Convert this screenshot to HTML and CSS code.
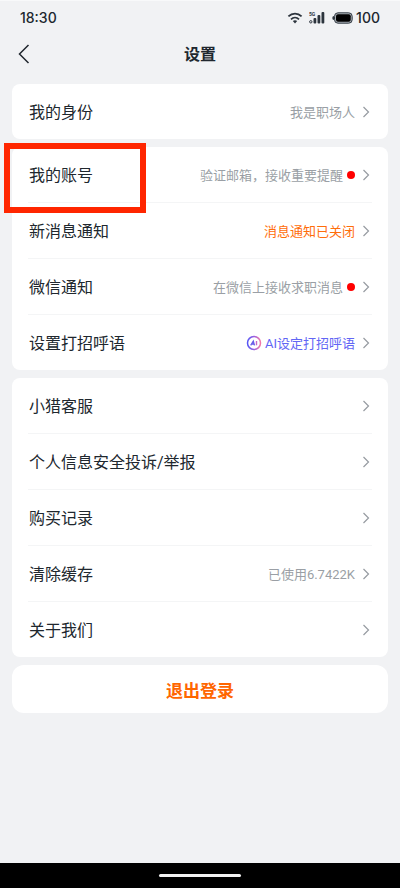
FILE: index.html
```html
<!DOCTYPE html>
<html lang="zh-CN">
<head>
<meta charset="utf-8">
<meta name="viewport" content="width=device-width, initial-scale=1">
<title>设置</title>
<link rel="stylesheet" href="styles.css">
</head>
<body>
<svg class="defs" aria-hidden="true">
  <defs>
    <symbol id="chevron" viewBox="0 0 8 12"><path d="M1.5 1 6.5 6l-5 5" fill="none" stroke="currentColor" stroke-width="1.2"/></symbol>
    <linearGradient id="ai-ring" x1="0" y1="0" x2="1" y2="0">
      <stop offset="0" stop-color="#5556f5"/><stop offset=".5" stop-color="#9a60df"/><stop offset="1" stop-color="#f277a8"/>
    </linearGradient>
  </defs>
</svg>
<div class="screen">
  <div class="status">
    <span class="time">18:30</span>
    <span class="indicators">
      <svg class="wifi" viewBox="0 0 16 12" aria-hidden="true"><g fill="none" stroke="#2c343d" stroke-width="1.8"><path d="M1.4 4.4c3.8-3.7 9.4-3.7 13.2 0"/><path d="M4 7.3c2.3-2.2 5.7-2.2 8 0"/></g><path d="M5.8 9.1c1.3-1.1 3.1-1.1 4.4 0L8 11.5z" fill="#2c343d"/></svg>
      <svg class="signal" viewBox="0 0 16 13" aria-hidden="true"><g fill="#2c343d"><rect x="4.500" y="7" width="2.800" height="5.500" rx="1"/><rect x="8.500" y="4" width="2.800" height="8.500" rx="1"/><rect x="12.500" y="1" width="2.800" height="11.500" rx="1"/></g><circle cx="1.800" cy="10.800" r="1.200" fill="none" stroke="#2c343d"/><text x="0" y="5">5G</text></svg>
      <svg class="battery" viewBox="0 0 21 12" aria-hidden="true"><path d="M2 4Q.3 4 .3 6T2 8z" fill="#2c343d"/><rect x="2.500" y=".8" width="17.700" height="10.400" rx="3.500" fill="#a9afb5" stroke="#343c45"/><rect x="4" y="2.300" width="14.700" height="7.400" rx="2" fill="#000"/></svg>
      <span class="charge">100</span>
    </span>
  </div>
  <header class="header">
    <button class="back" type="button" aria-label="返回"><svg viewBox="0 0 12 20" aria-hidden="true"><path d="M10.500 1 1.500 10l9 9" fill="none" stroke="#20272e" stroke-width="1.500"/></svg></button>
    <h1>设置</h1>
  </header>
  <main class="main">
    <ul class="card">
      <li><a class="row" href="#"><span class="label">我的身份</span><span class="value">我是职场人</span><svg class="chevron"><use href="#chevron"/></svg></a></li>
    </ul>
    <ul class="card">
      <li class="marked"><a class="row" href="#"><span class="label">我的账号</span><span class="value">验证邮箱，接收重要提醒</span><i class="dot"></i><svg class="chevron"><use href="#chevron"/></svg></a></li>
      <li><a class="row" href="#"><span class="label">新消息通知</span><span class="value orange">消息通知已关闭</span><svg class="chevron"><use href="#chevron"/></svg></a></li>
      <li><a class="row" href="#"><span class="label">微信通知</span><span class="value">在微信上接收求职消息</span><i class="dot"></i><svg class="chevron"><use href="#chevron"/></svg></a></li>
      <li><a class="row" href="#"><span class="label">设置打招呼语</span><svg class="ai" viewBox="0 0 16 16" aria-hidden="true"><circle cx="8" cy="8" r="6.500" fill="none" stroke="url(#ai-ring)" stroke-width="1.500"/><path d="M4.700 10.300 7.300 6l1.200 4.300M6 9h2" fill="none" stroke="#6659e8" stroke-width="1.300"/><path d="M10.500 6v4.300" stroke="#c768c8" stroke-width="1.400"/></svg><span class="value violet">AI设定打招呼语</span><svg class="chevron"><use href="#chevron"/></svg></a></li>
    </ul>
    <ul class="card">
      <li><a class="row" href="#"><span class="label">小猎客服</span><svg class="chevron"><use href="#chevron"/></svg></a></li>
      <li><a class="row" href="#"><span class="label">个人信息安全投诉/举报</span><svg class="chevron"><use href="#chevron"/></svg></a></li>
      <li><a class="row" href="#"><span class="label">购买记录</span><svg class="chevron"><use href="#chevron"/></svg></a></li>
      <li><a class="row" href="#"><span class="label">清除缓存</span><span class="value">已使用6.7422K</span><svg class="chevron"><use href="#chevron"/></svg></a></li>
      <li><a class="row" href="#"><span class="label">关于我们</span><svg class="chevron"><use href="#chevron"/></svg></a></li>
    </ul>
    <button class="logout" type="button">退出登录</button>
  </main>
  <div class="navbar"><span class="handle"></span></div>
</div>
</body>
</html>
```
FILE: styles.css
```css
*,
*::after {
  box-sizing: border-box;
}

body {
  margin: 0;
  background: #f1f2f4;
  color: #20272e;
  font-family: Roboto, "Noto Sans CJK SC", sans-serif;
}

.defs {
  position: absolute;
  width: 0;
  height: 0;
}

.screen {
  display: flex;
  flex-direction: column;
  min-height: 100vh;
}

.status {
  display: flex;
  align-items: center;
  justify-content: space-between;
  height: 34px;
  padding: 0 20px;
  border-top: 1px solid #f8f9fa;
  font-family: Inter, sans-serif;
  font-size: 14px;
  font-weight: 500;
}

.indicators {
  display: flex;
  align-items: center;
}

.wifi {
  width: 16px;
  height: 12px;
  margin-right: 6px;
}

.signal {
  width: 16px;
  height: 13px;
  margin-right: 7px;
}

.signal text {
  font: bold 5px Roboto, sans-serif;
  fill: #2c343d;
}

.battery {
  width: 21px;
  height: 12px;
  margin-right: 3px;
}

.header {
  display: grid;
  grid-template-columns: 40px 1fr 40px;
  align-items: center;
  height: 40px;
  margin-bottom: 10px;
  padding: 0 8px;
}

.back {
  display: flex;
  padding: 10px;
  border: 0;
  background: none;
}

.back svg {
  width: 12px;
  height: 20px;
}

h1 {
  margin: 0;
  padding-top: 2px;
  font-size: 16px;
  line-height: 24px;
  font-weight: 700;
  text-align: center;
}

.main {
  display: flex;
  flex: 1;
  flex-direction: column;
  gap: 8px;
  padding: 0 12px 24px;
}

.card {
  margin: 0;
  padding: 0 16px;
  border-radius: 8px;
  background: #fff;
  list-style: none;
}

.card li + li {
  border-top: 1px solid #f4f5f6;
}

.row {
  display: flex;
  align-items: center;
  height: 55px;
  color: inherit;
  text-decoration: none;
}

.label {
  flex: 1;
  padding: 3px 0 0 1px;
  font-size: 16px;
  line-height: 24px;
}

.value {
  padding-top: 3px;
  color: #9a9fa5;
  font-size: 13px;
  line-height: 20px;
}

.orange {
  color: #ff6d0a;
}

.violet {
  color: #6266f5;
}

.dot {
  width: 8px;
  height: 8px;
  margin-left: 4px;
  border-radius: 50%;
  background: #f00;
}

.ai {
  width: 16px;
  height: 16px;
  margin-right: 3px;
}

.chevron {
  width: 8px;
  height: 12px;
  margin: 0 2px 0 7px;
  color: #969ba1;
}

.marked {
  position: relative;
}

.marked::after {
  position: absolute;
  top: -4px;
  left: -24px;
  width: 142px;
  height: 70px;
  border: 6px solid #ff2600;
  content: "";
  pointer-events: none;
}

.logout {
  height: 48px;
  padding: 3px 0 0;
  border: 0;
  border-radius: 12px;
  background: #fff;
  color: #ff6600;
  font: 700 17px/24px Roboto, "Noto Sans CJK SC", sans-serif;
}

.navbar {
  display: flex;
  align-items: center;
  justify-content: center;
  height: 25px;
  background: #000;
}

.handle {
  width: 82px;
  height: 3px;
  border-radius: 2px;
  background: #f2f2f2;
}
```
